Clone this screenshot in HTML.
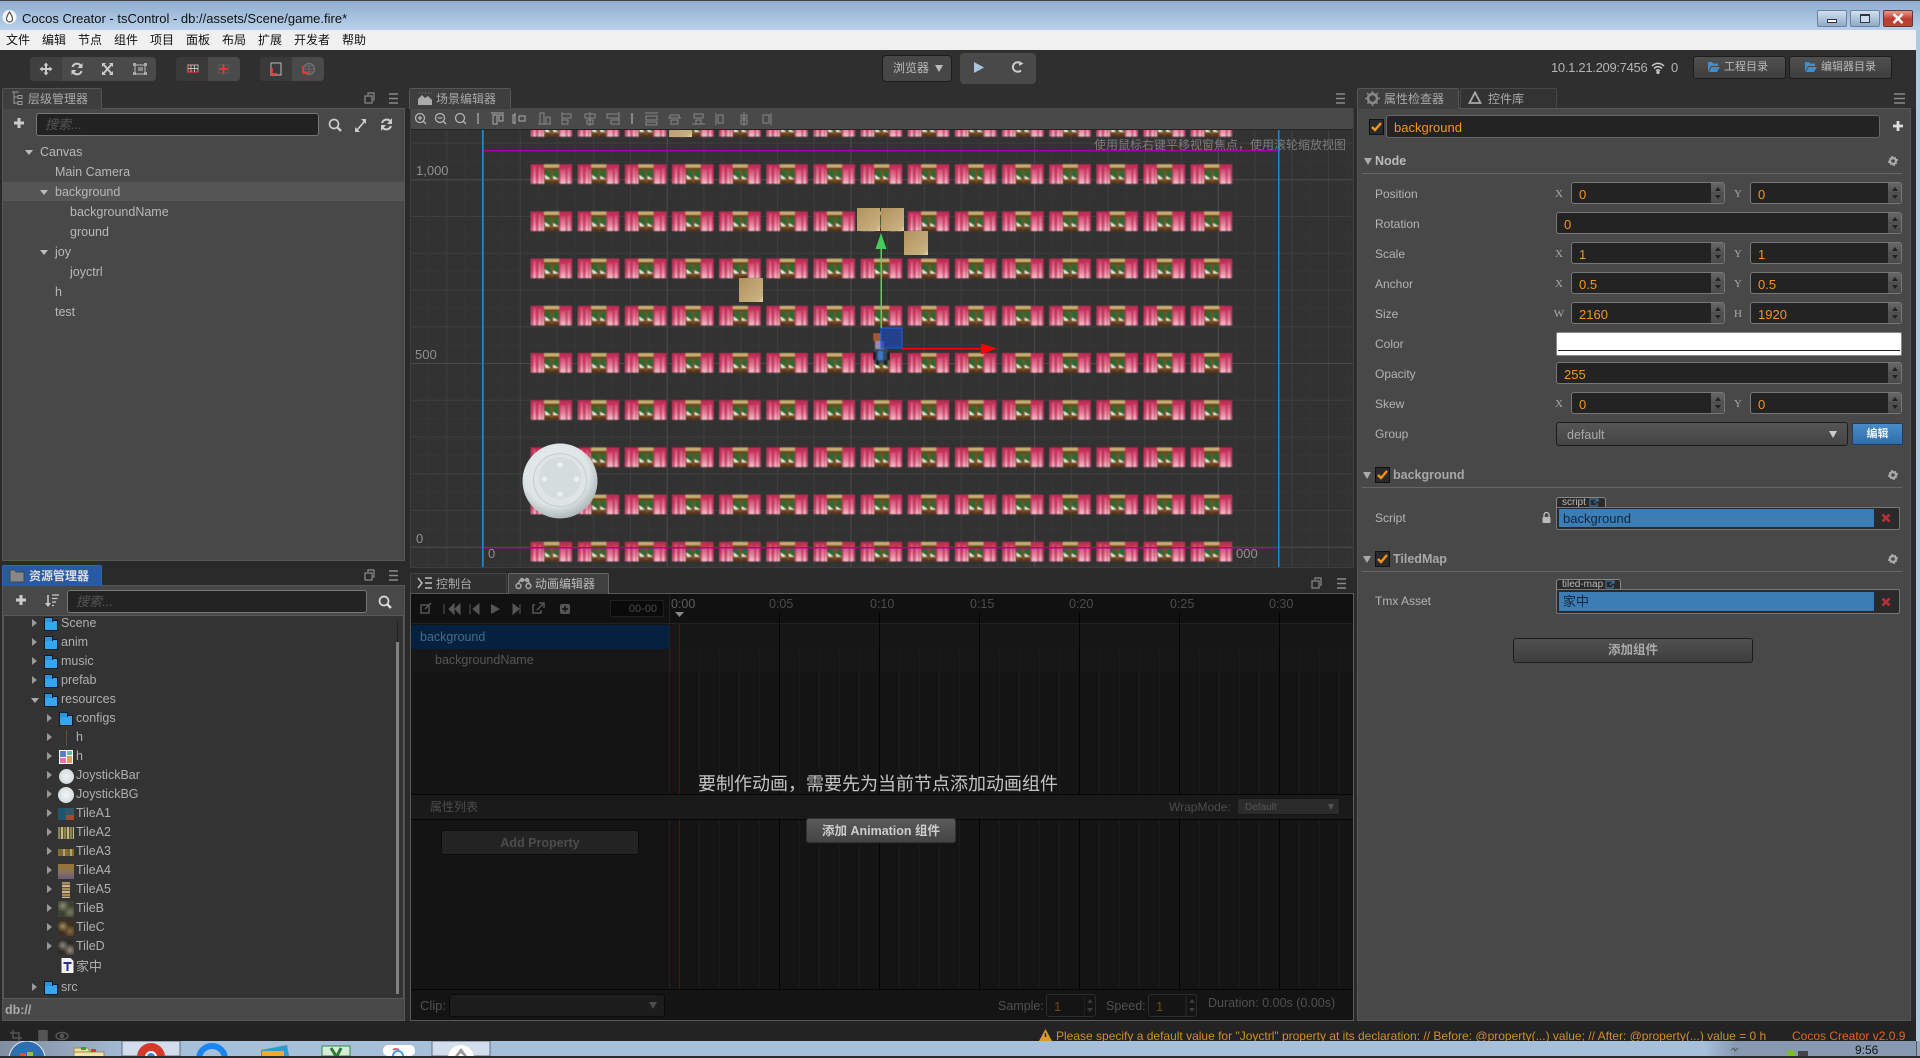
<!DOCTYPE html>
<html><head><meta charset="utf-8"><title>Cocos Creator</title>
<style>
*{box-sizing:border-box;margin:0;padding:0}
html,body{width:1920px;height:1056px;overflow:hidden;background:#2a2a2a;font-family:"Liberation Sans","Noto Sans CJK SC",sans-serif;font-size:12px;color:#bbb}
.a,.t,.p,.ip,.tab,.btn,.sp,.m{position:absolute}
.t{white-space:nowrap;line-height:16px;height:16px}
.m{top:32px;color:#111;font-size:12px;line-height:16px;white-space:nowrap}
.tab{height:21px;background:#3a3a3a;border:1px solid #555;border-bottom:0;border-radius:2px 2px 0 0;color:#aaa;font-size:12px;line-height:20px;white-space:nowrap}
.p{background:#484848;border:1px solid #565656}
.ip{height:22px;background:#232323;border:1px solid #777;border-radius:3px;color:#f7941d;font-size:13px;line-height:23px;padding-left:7px;overflow:hidden}
.ip:after{content:"";position:absolute;right:0;top:0;bottom:0;width:13px;background:linear-gradient(#666,#555 48%,#333 50%,#555 52%,#4a4a4a);}
.ip:before{content:"";position:absolute;right:3px;top:1px;width:0;height:0;border:3.5px solid transparent;border-bottom:4px solid #222;z-index:2}
.ip i{position:absolute;right:3px;bottom:1px;width:0;height:0;border:3.5px solid transparent;border-top:4px solid #222;z-index:2}
.noS:after,.noS:before{display:none}
.l{color:#b4b4b4;font-size:12px}
.xl{position:absolute;font:11px/14px "Liberation Serif",serif;color:#aaa;width:12px;text-align:center}
.btn{background:linear-gradient(#505050,#3e3e3e);border:1px solid #1c1c1c;border-radius:3px;color:#bbb;text-align:center;white-space:nowrap}
.tree{color:#b8b8b8;font-size:12.5px}
.ar{position:absolute;width:0;height:0;border:4px solid transparent}
.ad{border-top:5px solid #bbb;border-bottom:0}
.ar2{position:absolute;width:0;height:0;border:4px solid transparent;border-left:5px solid #999;border-right:0}
.ad2{position:absolute;width:0;height:0;border:4.5px solid transparent;border-top:5px solid #aaa;border-bottom:0}
.f{position:absolute;width:14px;height:11px;background:#35a6ee;border:1px solid #0e1d2a}
.f:before{content:"";position:absolute;left:-1px;top:-4px;width:7px;height:4px;background:#2b95dc;border:1px solid #0e1d2a;border-bottom:0}
.as{color:#b0b0b0;font-size:12.5px}
.th{position:absolute;left:58px;width:16px;height:16px}
.cb{position:absolute;width:15px;height:16px;background:#2a2a2a;border:1px solid #111}
.gear{position:absolute;width:10px;height:10px}
.sep{position:absolute;left:1362px;width:540px;height:1px;background:#666}
.tag{position:absolute;height:11px;background:#2a2a2a;border:1px solid #888;border-bottom:0;border-radius:3px 3px 0 0;color:#bbb;font:10px/9px "Liberation Sans",sans-serif;padding-left:5px;overflow:hidden}
.fld{position:absolute;background:#2a2a2a;border:1px solid #777;border-radius:2px}
.blue{position:absolute;background:#3d7db6;color:#14283c;font-size:13px;line-height:19px;padding-left:4px}
</style></head><body>

<svg width="0" height="0" style="position:absolute"><defs><symbol id="gr" viewBox="0 0 10 10"><path d="M5 0l1 1.500 1.800-.6.400 1.900 1.900.4-.6 1.800L10 5l-1.500 1 .6 1.800-1.900.4-.4 1.900-1.800-.6L5 10l-1-1.500-1.800.6-.4-1.900-1.900-.4.6-1.800L0 5l1.500-1-.6-1.800 1.900-.4.400-1.900 1.800.6z M5 3.200a1.800 1.800 0 1 0 0 3.600 1.800 1.800 0 0 0 0-3.600z" fill="#aaa" fill-rule="evenodd"/></symbol>
<symbol id="xx" viewBox="0 0 10 10"><path d="M1.500 1.500l7 7M8.500 1.500l-7 7" stroke="#b7303a" stroke-width="2.600"/></symbol></defs></svg>

<!-- title bar -->
<div class="a" style="left:0;top:0;width:1920px;height:30px;background:linear-gradient(#8fadd0,#b9d1e9);border-top:1px solid #444"></div>
<svg class="a" style="left:2px;top:9px" width="15" height="16" viewBox="0 0 15 16"><circle cx="7.500" cy="8" r="7" fill="#f4f4f4"/><path d="M7.500 3C5.500 6 4.500 8 4.500 10a3 3 0 0 0 6 0C10.500 8 9.500 6 7.500 3z" fill="#fff" stroke="#555" stroke-width="1.200"/></svg>
<div class="t" style="left:22px;top:11px;color:#111;font-size:13px">Cocos Creator - tsControl - db://assets/Scene/game.fire*</div>
<div class="a" style="left:1817px;top:10px;width:30px;height:17px;background:linear-gradient(#d2e0ef,#8eaac8);border:1px solid #6a84a2;border-radius:2px"></div>
<div class="a" style="left:1827px;top:19px;width:10px;height:4px;border:1px solid #334;background:#fff"></div>
<div class="a" style="left:1850px;top:10px;width:30px;height:17px;background:linear-gradient(#d2e0ef,#8eaac8);border:1px solid #6a84a2;border-radius:2px"></div>
<div class="a" style="left:1860px;top:14px;width:10px;height:9px;border:1px solid #334;border-top-width:2px;background:#cfdcec"></div>
<div class="a" style="left:1883px;top:10px;width:30px;height:17px;background:linear-gradient(#e89a8c,#c0392e 55%,#b8473a);border:1px solid #6a3530;border-radius:2px"></div>
<svg class="a" style="left:1892px;top:13px" width="12" height="11" viewBox="0 0 12 11"><path d="M1.500 1l9 9M10.500 1l-9 9" stroke="#fff" stroke-width="2.600"/></svg>

<!-- menu -->
<div class="a" style="left:0;top:30px;width:1916px;height:20px;background:#f0f0f0"></div>
<div class="a" style="left:1916px;top:30px;width:4px;height:1011px;background:#b0c8e0"></div>
<div class="m" style="left:6px">文件</div><div class="m" style="left:42px">编辑</div><div class="m" style="left:78px">节点</div><div class="m" style="left:114px">组件</div><div class="m" style="left:150px">项目</div><div class="m" style="left:186px">面板</div><div class="m" style="left:222px">布局</div><div class="m" style="left:258px">扩展</div><div class="m" style="left:294px">开发者</div><div class="m" style="left:342px">帮助</div>

<!-- toolbar -->
<div class="a" style="left:0;top:50px;width:1916px;height:58px;background:#2f2f2f"></div>
<div class="a" style="left:30px;top:57px;width:126px;height:24px;background:#4a4a4a;border-radius:4px"></div>
<div class="a" style="left:30px;top:57px;width:32px;height:24px;background:#404040;border-radius:4px 0 0 4px"></div>
<div class="a" style="left:176px;top:57px;width:64px;height:24px;background:#4a4a4a;border-radius:4px"></div>
<div class="a" style="left:176px;top:57px;width:32px;height:24px;background:#3a3a3a;border-radius:4px 0 0 4px"></div>
<div class="a" style="left:260px;top:57px;width:64px;height:24px;background:#4a4a4a;border-radius:4px"></div>
<div class="a" style="left:260px;top:57px;width:32px;height:24px;background:#3a3a3a;border-radius:4px 0 0 4px"></div>
<svg class="a" style="left:0;top:50px" width="340" height="40" viewBox="0 50 340 40" fill="none">
<path d="M46 65v8M42 69h8" stroke="#ccc" stroke-width="2"/><path d="M46 62.500l-2.500 3h5zM46 75.500l-2.500-3h5zM39.500 69l3-2.500v5zM52.500 69l-3-2.500v5z" fill="#ccc"/>
<path d="M72.500 67a4.500 4.500 0 0 1 8-1.500M81.500 71a4.500 4.500 0 0 1-8 1.500" stroke="#ccc" stroke-width="2"/><path d="M82.500 63v5h-5zM71.500 75v-5h5z" fill="#ccc"/>
<path d="M104 65l7 8M111 65l-7 8" stroke="#ccc" stroke-width="2"/><path d="M102 63h4l-4 4zM113 63h-4l4 4zM102 75h4l-4-4zM113 75h-4l4-4z" fill="#ccc"/>
<rect x="135" y="65" width="10" height="9" stroke="#aaa" stroke-width="1.200"/><path d="M133 63h3v3h-3zM144 63h3v3h-3zM133 72h3v3h-3zM144 72h3v3h-3z" fill="#aaa"/><rect x="138" y="67" width="5" height="4" fill="#888"/>
<rect x="188" y="65" width="10" height="7" stroke="#bbb" stroke-width=".9"/><path d="M187.500 64v8h11" stroke="#e33" stroke-width="1.300"/><path d="M191 65v7M194.500 65v7M188 68.500h10" stroke="#bbb" stroke-width=".9"/>
<rect x="218" y="65" width="11" height="8" stroke="#666" stroke-width=".9" stroke-dasharray="1 1"/><path d="M223.500 64v10M219 69h9" stroke="#e33" stroke-width="1.800"/>
<rect x="271" y="63" width="10" height="12" stroke="#bbb" stroke-width="1"/><path d="M272 68v6h5" stroke="#e33" stroke-width="1.800"/>
<circle cx="309" cy="69" r="5.500" stroke="#777"/><path d="M303.500 69h11M309 63.500v11M304.500 66h9M304.500 72h9" stroke="#777" stroke-width=".7"/><path d="M303 66v7h6" stroke="#e33" stroke-width="1.800"/>
</svg>

<div class="btn" style="left:882px;top:55px;width:70px;height:27px;background:#474747;border-radius:4px"></div>
<div class="t" style="left:893px;top:60px;color:#bbb;font-size:12px">浏览器</div>
<div class="a" style="left:935px;top:65px;width:0;height:0;border:4px solid transparent;border-top:7px solid #bbb;border-bottom:0"></div>
<div class="a" style="left:960px;top:53px;width:76px;height:31px;background:#494949;border-radius:4px"></div>
<svg class="a" style="left:970px;top:58px" width="60" height="18" viewBox="0 0 60 18"><path d="M4 4l10 5.500-10 5.500z" fill="#a8c4de"/><path d="M51 5.500a4.800 4.800 0 1 0 0 7" stroke="#ccc" stroke-width="2" fill="none"/><path d="M49 3l4.500 2.500-4.500 2.500z" fill="#ccc"/></svg>

<div class="t" style="left:1551px;top:60px;color:#b4b4b4;font-size:13px;letter-spacing:-.3px">10.1.21.209:7456</div>
<svg class="a" style="left:1651px;top:62px" width="14" height="12" viewBox="0 0 14 12" fill="none" stroke="#ccc" stroke-width="1.400"><path d="M1 4c3.500-3.500 8.500-3.500 12 0M3 6.500c2.500-2.500 5.500-2.500 8 0M5 8.800c1.300-1.200 2.700-1.200 4 0"/><circle cx="7" cy="10.500" r=".9" fill="#ccc"/></svg>
<div class="t" style="left:1671px;top:60px;color:#b4b4b4;font-size:13px">0</div>
<div class="btn" style="left:1693px;top:56px;width:93px;height:23px"></div>
<div class="btn" style="left:1789px;top:56px;width:103px;height:23px"></div>
<div class="t" style="left:1724px;top:59px;font-size:11px;color:#bbb">工程目录</div>
<div class="t" style="left:1821px;top:59px;font-size:11px;color:#bbb">编辑器目录</div>
<svg class="a" style="left:1708px;top:61px" width="12" height="12" viewBox="0 0 12 12"><path d="M0 1h4l1 1.500h5V5H3L0 11z M3.500 6H12L9 11H1z" fill="#3f8ed0"/></svg>
<svg class="a" style="left:1805px;top:61px" width="12" height="12" viewBox="0 0 12 12"><path d="M0 1h4l1 1.500h5V5H3L0 11z M3.500 6H12L9 11H1z" fill="#3f8ed0"/></svg>

<!-- hierarchy -->
<div class="tab" style="left:2px;top:88px;width:100px;padding-left:25px;z-index:2;background:#3e3e3e">层级管理器</div>
<svg class="a" style="left:9px;top:91px;z-index:3" width="16" height="15" viewBox="0 0 16 15" fill="none" stroke="#999"><path d="M3 1h7M5 1v12M5 6h4M5 12h4"/><rect x="9" y="4.500" width="4" height="3"/><rect x="9" y="10.500" width="4" height="3"/></svg>
<svg class="a" style="left:364px;top:92px" width="36" height="14" viewBox="0 0 36 14" fill="none" stroke="#8a8a8a" stroke-width="1.200"><rect x="1" y="4" width="7" height="7"/><path d="M4 3V1h6v7H9"/><path d="M25 2h9M25 6.500h9M25 11h9" stroke-width="1.500"/></svg>
<div class="p" style="left:2px;top:108px;width:403px;height:453px"></div>
<svg class="a" style="left:12px;top:116px" width="14" height="14" viewBox="0 0 14 14"><path d="M7 2v10M2 7h10" stroke="#ccc" stroke-width="3"/></svg>
<div class="a" style="left:36px;top:113px;width:283px;height:23px;background:#222;border:1px solid #777;border-radius:3px;padding-left:8px;color:#555;font-size:13px;line-height:22px;font-style:italic">搜索...</div>
<svg class="a" style="left:326px;top:116px" width="70" height="18" viewBox="0 0 70 18" fill="none" stroke="#ccc" stroke-width="1.700"><circle cx="8" cy="8" r="4.500"/><path d="M11 11l4 4" stroke-width="2.400"/><path d="M31 14l7-8" /><path d="M35 3h5v5zM29 11v5h5z" fill="#ccc" stroke="none"/><path d="M56 7a5 5 0 0 1 9-1M65 10a5 5 0 0 1-9 1" stroke-width="2"/><path d="M66 2v6h-5zM55 15V9h5z" fill="#ccc" stroke="none"/></svg>
<div class="a" style="left:3px;top:182px;width:401px;height:19px;background:#555"></div>
<div class="ar ad" style="left:25px;top:150px"></div><div class="t tree" style="left:40px;top:144px">Canvas</div>
<div class="t tree" style="left:55px;top:164px">Main Camera</div>
<div class="ar ad" style="left:40px;top:190px"></div><div class="t tree" style="left:55px;top:184px">background</div>
<div class="t tree" style="left:70px;top:204px">backgroundName</div>
<div class="t tree" style="left:70px;top:224px">ground</div>
<div class="ar ad" style="left:40px;top:250px"></div><div class="t tree" style="left:55px;top:244px">joy</div>
<div class="t tree" style="left:70px;top:264px">joyctrl</div>
<div class="t tree" style="left:55px;top:284px">h</div>
<div class="t tree" style="left:55px;top:304px">test</div>

<!-- scene -->
<div class="tab" style="left:409px;top:88px;width:102px;padding-left:26px;z-index:2;background:#3e3e3e">场景编辑器</div>
<svg class="a" style="left:417px;top:91px;z-index:3" width="16" height="15" viewBox="0 0 16 15"><path d="M1 14V8l4-4 3 3 3-2 4 4v5z" fill="#aaa"/><path d="M2 2h1M5 2h1M8 2h1M11 2h1M14 2h1" stroke="#777"/></svg>
<svg class="a" style="left:1334px;top:92px" width="14" height="14" viewBox="0 0 14 14" stroke="#8a8a8a" stroke-width="1.500"><path d="M2 2h9M2 6.500h9M2 11h9"/></svg>
<div class="a" style="left:410px;top:108px;width:944px;height:460px;background:#2a2a2a;border:1px solid #3f3f3f"></div>
<div class="a" style="left:411px;top:108px;width:942px;height:22px;background:#494949;border-bottom:1px solid #252525"></div>
<svg class="a" style="left:411px;top:108px" width="380" height="22" viewBox="411 108 380 22" fill="none" stroke="#b5b5b5" stroke-width="1.300">
<circle cx="420" cy="118" r="4.500"/><path d="M423 121l3 3M418 118h4M420 116v4" /><circle cx="440" cy="118" r="4.500"/><path d="M443 121l3 3M438 118h4"/><circle cx="460" cy="118" r="4.500"/><path d="M463 121l3 3"/>
<path d="M478 113v11M632 113v11" stroke="#aaa"/>
<path d="M491 113h13M493 115h4v9h-4zM499 115h4v6h-4z M515 113v11M515 115h-2v8h2zM519 116h6v5h-6z" stroke="#aaa" stroke-width="1"/>
<path d="M538 124h13M540 113h4v11h-4zM546 117h4v7h-4zM562 112v13M562 114h9v4h-9zM562 120h6v4h-6z M590 112v14M585 114h10v4h-10zM587 120h6v4h-6zM619 112v13M607 114h12v4h-12zM611 120h8v4h-8z" stroke="#888" stroke-width="1"/>
<path d="M645 113h13M646 116h11v4h-11zM646 122h11v3h-11zM668 118h13M670 115h9v3h-9zM671 120h7v4h-7zM692 124h13M694 114h9v4h-9zM696 120h5v4h-5z" stroke="#888" stroke-width="1"/>
<path d="M716 113v12M718 115h5v8h-5zM744 112v14M741 115h6v3h-6zM741 120h6v4h-6zM771 113v12M763 115h6v8h-6z" stroke="#888" stroke-width="1"/>
</svg>

<svg class="a" style="left:0;top:0" width="1920" height="1056" viewBox="0 0 1920 1056">
<defs>
<clipPath id="vp"><rect x="411" y="130" width="942" height="437"/></clipPath>
<filter id="soft" x="0" y="0" width="100%" height="100%"><feGaussianBlur stdDeviation=".45"/></filter>
<pattern id="minor" x="483" y="179.300" width="36.740" height="36.740" patternUnits="userSpaceOnUse"><path d="M.5 0v36.740M0 .5h36.740" stroke="#3f3f3f" fill="none"/><path d="M18.870 0v36.740M0 18.870h36.740" stroke="#363636" fill="none"/></pattern>
<pattern id="major" x="483" y="179.300" width="183.700" height="183.700" patternUnits="userSpaceOnUse"><path d="M.5 0v183.700M0 .5h183.700" stroke="#4a4a4a" fill="none"/></pattern>
<linearGradient id="cl" x1="0" x2="0" y1="0" y2="1"><stop offset="0" stop-color="#bf2b54"/><stop offset=".6" stop-color="#c93e66"/><stop offset="1" stop-color="#d8688a"/></linearGradient>
<linearGradient id="cw" x1="0" x2="0" y1="0" y2="1"><stop offset="0" stop-color="#d04a70"/><stop offset=".6" stop-color="#e68aa2"/><stop offset="1" stop-color="#f5c4ce"/></linearGradient>
<linearGradient id="bk" x1="0" x2="1" y1="0" y2="1"><stop offset="0" stop-color="#b0925f"/><stop offset=".5" stop-color="#bfa371"/><stop offset=".85" stop-color="#c9b080"/><stop offset="1" stop-color="#e6d8a4"/></linearGradient>
<pattern id="tile" x="530.600" y="117" width="47.150" height="47.200" patternUnits="userSpaceOnUse">
<rect x="0" y="0" width="14.500" height="19.600" fill="url(#cl)"/>
<rect x="27.500" y="0" width="14" height="19.600" fill="url(#cl)"/>
<rect x="3" y="2" width="2" height="17.600" fill="url(#cw)"/>
<rect x="8" y="3" width="2.500" height="16.600" fill="url(#cw)"/>
<rect x="11.500" y="5" width="3" height="14.600" fill="url(#cw)"/>
<rect x="30" y="5" width="5" height="14.600" fill="url(#cw)"/>
<rect x="37" y="4" width="2.500" height="15.600" fill="url(#cw)"/>
<rect x="13.500" y="6" width="15" height="13.600" fill="#5e3c1c"/>
<rect x="13.500" y="0" width="15" height="3.500" fill="#c7ae70"/>
<rect x="13.500" y="3.500" width="15" height="2.500" fill="#6a461e"/>
<path d="M15 6h5.500v8H15zM22.500 6H28v7.500h-5.500z" fill="#2c6a30"/>
<path d="M14 10.500l3 2 3 2.500-5 0zM22.500 11.500l3 2 3 1.500-6 0z" fill="#eef0e0"/>
<rect x="20.500" y="6" width="2" height="13.600" fill="#7a5226"/>
<rect x="13.500" y="15" width="15" height="1.600" fill="#7a5226"/>
<rect x="13.500" y="18" width="15" height="1.600" fill="#54341a"/>
</pattern>
</defs>
<g clip-path="url(#vp)">
<rect x="411" y="130" width="942" height="437" fill="#323232"/>
<rect x="411" y="130" width="942" height="437" fill="url(#minor)"/>
<rect x="411" y="130" width="942" height="437" fill="url(#major)"/>
<rect x="530" y="117" width="703" height="450" fill="url(#tile)" filter="url(#soft)"/>
<rect x="669" y="117" width="23" height="20" fill="url(#bk)"/>
<rect x="857" y="208" width="23" height="23" fill="url(#bk)"/>
<rect x="881" y="208" width="23" height="23" fill="url(#bk)"/>
<rect x="904" y="231" width="24" height="24" fill="url(#bk)"/>
<rect x="739" y="278" width="24" height="24" fill="url(#bk)"/>
<rect x="483" y="150" width="795" height="1.500" fill="#a800a8"/>
<rect x="483" y="547" width="795" height="1.500" fill="#a800a8"/>
<rect x="482" y="130" width="1.500" height="437" fill="#1e88d8"/>
<rect x="1278" y="130" width="1.500" height="437" fill="#1e88d8"/>
<text x="416" y="175" font-size="13" fill="#909090" font-family="Liberation Sans">1,000</text>
<text x="415" y="359" font-size="13" fill="#909090" font-family="Liberation Sans">500</text>
<text x="416" y="543" font-size="13" fill="#909090" font-family="Liberation Sans">0</text>
<text x="488" y="558" font-size="13" fill="#909090" font-family="Liberation Sans">0</text>
<text x="1236" y="558" font-size="13" fill="#909090" font-family="Liberation Sans">000</text>
<text x="1094" y="149" font-size="12" fill="#7c7c7c" font-family="Liberation Sans, Noto Sans CJK SC">使用鼠标右键平移视窗焦点，使用滚轮缩放视图</text>
<!-- sprite -->
<g filter="url(#soft)"><path d="M873 333h8v8h-8z" fill="#a5562f"/><path d="M874 349h14v14h-14z" fill="#34465c"/><path d="M878 351h5v9h-5z" fill="#3c78c8"/><path d="M873 352h3v8h-3zM887 352h3v8h-3zM876 360h3v5h-3zM884 360h3v5h-3z" fill="#1c1c22"/><path d="M875 341h9v8h-9z" fill="#9a8aa8"/></g>
<rect x="881" y="328" width="21" height="20" fill="#1d46b4" fill-opacity=".7" stroke="#1560f0"/>
<rect x="880.500" y="248" width="1.500" height="80" fill="#55d068"/><path d="M881 233l5.500 16h-11z" fill="#45cc5a"/>
<rect x="902" y="348" width="80" height="1.500" fill="#f00"/><path d="M997 348.500l-16-5v11z" fill="#f00"/>
<!-- joystick -->
<defs><radialGradient id="jb" cx=".45" cy=".4" r=".62"><stop offset="0" stop-color="#eef2f2"/><stop offset=".7" stop-color="#dde4e5"/><stop offset="1" stop-color="#a9b3b6"/></radialGradient></defs>
<circle cx="560" cy="481" r="37.500" fill="url(#jb)"/>
<circle cx="560" cy="480" r="26.500" fill="#dfe5e6" stroke="#c4cccd"/><circle cx="560" cy="478" r="21" fill="#d4dcdd"/>
<circle cx="560" cy="465" r="2.800" fill="#e9eeee"/><circle cx="560" cy="494" r="2.800" fill="#e9eeee"/><circle cx="544.500" cy="479" r="2.800" fill="#e9eeee"/><circle cx="576.500" cy="479" r="2.800" fill="#e9eeee"/>
</g>
</svg>

<!-- assets -->
<div class="tab" style="left:2px;top:565px;width:100px;background:#275aa0;border-color:#2d66b4;color:#ddd;font-weight:bold;padding-left:26px;z-index:2">资源管理器</div>
<svg class="a" style="left:9px;top:568px;z-index:3" width="16" height="15" viewBox="0 0 16 15"><path d="M1 2h5l1 2h8v10H1z" fill="#888" stroke="#444"/></svg>
<svg class="a" style="left:364px;top:569px" width="36" height="14" viewBox="0 0 36 14" fill="none" stroke="#8a8a8a" stroke-width="1.200"><rect x="1" y="4" width="7" height="7"/><path d="M4 3V1h6v7H9"/><path d="M25 2h9M25 6.500h9M25 11h9" stroke-width="1.500"/></svg>
<div class="p" style="left:2px;top:585px;width:403px;height:436px"></div>
<svg class="a" style="left:14px;top:593px" width="46" height="16" viewBox="0 0 46 16" fill="none" stroke="#ccc"><path d="M7 2v10M2 7h10" stroke-width="3"/><path d="M34 2v11" stroke-width="1.500"/><path d="M31 10l3 4 3-4z" fill="#ccc" stroke="none"/><path d="M38 2h7M38 5.500h5.500M38 9h4M38 12.500h2" stroke-width="1.300"/></svg>
<div class="a" style="left:67px;top:590px;width:300px;height:23px;background:#232323;border:1px solid #777;border-radius:3px;padding-left:8px;color:#555;font-size:13px;line-height:22px;font-style:italic">搜索...</div>
<svg class="a" style="left:377px;top:594px" width="18" height="16" viewBox="0 0 18 16" fill="none" stroke="#ddd" stroke-width="1.700"><circle cx="7" cy="7" r="4.500"/><path d="M10 10l4 4" stroke-width="2.400"/></svg>
<div class="a" style="left:3px;top:615px;width:401px;height:384px;background:#333;border:1px solid #585858;overflow:hidden"></div>
<div class="a" style="left:396px;top:642px;width:3px;height:352px;background:#808080"></div>
<div class="a" style="left:397px;top:621px;width:1px;height:21px;background:#222"></div>
<div class="t" style="left:5px;top:1002px;color:#aaa;font-weight:bold;font-size:12.500px">db://</div>

<div class="ar2" style="left:32px;top:619px"></div><div class="f" style="left:44px;top:620px"></div><div class="t as" style="left:61px;top:615px">Scene</div>
<div class="ar2" style="left:32px;top:638px"></div><div class="f" style="left:44px;top:639px"></div><div class="t as" style="left:61px;top:634px">anim</div>
<div class="ar2" style="left:32px;top:657px"></div><div class="f" style="left:44px;top:658px"></div><div class="t as" style="left:61px;top:653px">music</div>
<div class="ar2" style="left:32px;top:676px"></div><div class="f" style="left:44px;top:677px"></div><div class="t as" style="left:61px;top:672px">prefab</div>
<div class="ad2" style="left:31px;top:698px"></div><div class="f" style="left:44px;top:696px"></div><div class="t as" style="left:61px;top:691px">resources</div>
<div class="ar2" style="left:47px;top:714px"></div><div class="f" style="left:59px;top:715px"></div><div class="t as" style="left:76px;top:710px">configs</div>
<div class="ar2" style="left:47px;top:733px"></div><div class="a" style="left:66px;top:730px;width:1px;height:16px;background:#6a4a3a"></div><div class="t as" style="left:76px;top:729px">h</div>
<div class="ar2" style="left:47px;top:752px"></div><div class="t as" style="left:76px;top:748px">h</div>
<svg class="th" style="top:750px" width="16" height="16" viewBox="0 0 16 16"><rect x="1" y="0" width="14" height="14" fill="#fff"/><rect x="2" y="1" width="6" height="6" fill="#5b7fd0"/><rect x="9" y="1" width="5" height="4" fill="#56c59c"/><rect x="9" y="6" width="5" height="7" fill="#ec9a5c"/><rect x="2" y="8" width="6" height="5" fill="#ec70a8"/></svg>
<div class="ar2" style="left:47px;top:771px"></div><div class="t as" style="left:76px;top:767px">JoystickBar</div>
<div class="a" style="left:59px;top:769px;width:15px;height:15px;border-radius:50%;background:radial-gradient(#eef2f2,#c8d2d3)"></div>
<div class="ar2" style="left:47px;top:790px"></div><div class="t as" style="left:76px;top:786px">JoystickBG</div>
<div class="a" style="left:58px;top:787px;width:16px;height:16px;border-radius:50%;background:radial-gradient(#f4f6f6,#c8d2d3)"></div>
<div class="ar2" style="left:47px;top:809px"></div><div class="t as" style="left:76px;top:805px">TileA1</div>
<div class="a" style="left:58px;top:808px;width:16px;height:12px;background:linear-gradient(90deg,#1f5470 0 45%,#33566a 45% 100%);"></div><div class="a" style="left:66px;top:815px;width:8px;height:5px;background:#a5482c"></div>
<div class="ar2" style="left:47px;top:828px"></div><div class="t as" style="left:76px;top:824px">TileA2</div>
<div class="a" style="left:58px;top:827px;width:16px;height:12px;background:repeating-linear-gradient(90deg,#8c8450 0 2px,#4a5a28 2px 3px,#c4b898 3px 5px,#745028 5px 6px)"></div>
<div class="ar2" style="left:47px;top:847px"></div><div class="t as" style="left:76px;top:843px">TileA3</div>
<div class="a" style="left:58px;top:849px;width:16px;height:7px;background:repeating-linear-gradient(90deg,#8a6a28 0 3px,#6a6a4c 3px 5px,#b8a468 5px 7px)"></div>
<div class="ar2" style="left:47px;top:866px"></div><div class="t as" style="left:76px;top:862px">TileA4</div>
<div class="a" style="left:58px;top:864px;width:16px;height:15px;background:linear-gradient(#9a7434,#8a7454 50%,#6a5a7a)"></div>
<div class="ar2" style="left:47px;top:885px"></div><div class="t as" style="left:76px;top:881px">TileA5</div>
<div class="a" style="left:62px;top:882px;width:8px;height:16px;background:repeating-linear-gradient(#a88c5c 0 2px,#70604a 2px 3px,#c4b490 3px 5px,#7a4a3a 5px 6px)"></div>
<div class="ar2" style="left:47px;top:904px"></div><div class="t as" style="left:76px;top:900px">TileB</div>
<div class="a" style="left:58px;top:901px;width:16px;height:16px;background:radial-gradient(circle at 30% 30%,#8a8a70,transparent 40%),radial-gradient(circle at 75% 70%,#7a7a60,transparent 40%),#3c4232"></div>
<div class="ar2" style="left:47px;top:923px"></div><div class="t as" style="left:76px;top:919px">TileC</div>
<div class="a" style="left:58px;top:920px;width:16px;height:16px;background:radial-gradient(circle at 30% 40%,#a88c58,transparent 40%),radial-gradient(circle at 75% 70%,#8a6a3c,transparent 40%),#3c3020"></div>
<div class="ar2" style="left:47px;top:942px"></div><div class="t as" style="left:76px;top:938px">TileD</div>
<div class="a" style="left:58px;top:939px;width:16px;height:16px;background:radial-gradient(circle at 30% 40%,#8a8a80,transparent 40%),radial-gradient(circle at 75% 70%,#9a9078,transparent 40%),#302c28"></div>
<svg class="th" style="left:60px;top:958px" width="13" height="16" viewBox="0 0 13 16"><path d="M0 0h9l3 3v12H0z" fill="#f2f2f4"/><path d="M2 4h8v2H7v7H5V6H2z" fill="#27308e"/></svg>
<div class="t as" style="left:76px;top:959px;font-size:13px">家中</div>
<div class="ar2" style="left:32px;top:983px"></div><div class="f" style="left:44px;top:984px"></div><div class="t as" style="left:61px;top:979px">src</div>

<!-- animation -->
<div class="tab" style="left:410px;top:573px;width:97px;height:20px;background:#2f2f2f;border-color:#444;padding-left:25px;color:#aaa">控制台</div>
<svg class="a" style="left:417px;top:577px" width="16" height="12" viewBox="0 0 16 12" fill="none" stroke="#bbb" stroke-width="1.500"><path d="M1 1l4 5-4 5M8 1h7M8 6h7M8 11h7"/></svg>
<div class="tab" style="left:508px;top:573px;width:101px;background:#404040;border-color:#666;padding-left:26px;color:#bbb;z-index:2">动画编辑器</div>
<svg class="a" style="left:515px;top:577px;z-index:3" width="18" height="13" viewBox="0 0 18 13" fill="none" stroke="#aaa" stroke-width="1.400"><circle cx="3.500" cy="9" r="2.500"/><circle cx="13.500" cy="9" r="2.500"/><path d="M5 3h8l2 5M5 3L3 7"/><circle cx="7" cy="3" r="1.500"/><circle cx="12" cy="3" r="1.500"/></svg>
<svg class="a" style="left:1310px;top:577px" width="40" height="14" viewBox="0 0 40 14" fill="none" stroke="#8a8a8a" stroke-width="1.200"><rect x="2" y="4" width="7" height="7"/><path d="M5 3V1h6v7h-1"/><path d="M27 2h9M27 6.500h9M27 11h9" stroke-width="1.500"/></svg>
<div class="a" style="left:410px;top:593px;width:944px;height:428px;background:#141414;border:1px solid #5a5a5a"></div>
<div class="a" style="left:411px;top:594px;width:942px;height:30px;background:#111;border-bottom:1px solid #222"></div>
<svg class="a" style="left:411px;top:594px" width="970" height="400" viewBox="411 594 970 400" fill="none">
<defs><pattern id="mi" x="679" y="624" width="20" height="10" patternUnits="userSpaceOnUse"><path d="M.5 0v10" stroke="#1c1c1c"/></pattern></defs>
<rect x="669" y="624" width="684" height="366" fill="url(#mi)"/>
<rect x="411" y="625" width="258" height="24" fill="#04223f"/>
<rect x="411" y="649" width="942" height="23" fill="#171717"/>
<rect x="669" y="625" width="684" height="24" fill="#161616"/>
<rect x="669" y="649" width="684" height="23" fill="url(#mi)"/>
<path d="M779.500 612V990M879.500 612V990M979.500 612V990M1079.500 612V990M1179.500 612V990M1279.500 612V990" stroke="#020202"/>
<path d="M669.500 594V990" stroke="#222"/>
<path d="M679.500 624V990" stroke="#5c0f12"/>
<path d="M675 612h9l-4.500 5z" fill="#888"/>
<rect x="411" y="794" width="942" height="25" fill="#1a1a1a"/>
<path d="M411 794.500h942M411 819.500h942M411 989.500h942" stroke="#060606"/>
<path d="M421 605h8v8h-8zM425 609l6-6" stroke="#555" stroke-width="1.500"/>
<path d="M444 604v10M454 604l-5 5 5 5zM460 604l-5 5 5 5z" stroke="#555" fill="#555" stroke-width="1"/>
<path d="M470 604v10M479 604l-6 5 6 5z" stroke="#555" fill="#555"/>
<path d="M491 604l9 5-9 5z" fill="#555"/>
<path d="M520 604v10M513 604l6 5-6 5z" stroke="#555" fill="#555"/>
<path d="M535 605h-2v8h8v-3M537 610l6-6M539 603h5v5" stroke="#555" stroke-width="1.500"/>
<rect x="560" y="604" width="10" height="10" rx="2" fill="#555"/><path d="M565 606v6M562 609h6" stroke="#111" stroke-width="1.500"/>
</svg>
<div class="a" style="left:610px;top:600px;width:54px;height:17px;background:#0a0a0a;border:1px solid #202020;color:#4a4a4a;font-size:11px;line-height:16px;text-align:right;padding-right:6px">00-00</div>
<div class="t" style="left:671px;top:596px;color:#5c5c5c;font-size:12.500px">0:00</div>
<div class="t" style="left:769px;top:596px;color:#4c4c4c;font-size:12.500px">0:05</div>
<div class="t" style="left:870px;top:596px;color:#4c4c4c;font-size:12.500px">0:10</div>
<div class="t" style="left:970px;top:596px;color:#4c4c4c;font-size:12.500px">0:15</div>
<div class="t" style="left:1069px;top:596px;color:#4c4c4c;font-size:12.500px">0:20</div>
<div class="t" style="left:1170px;top:596px;color:#4c4c4c;font-size:12.500px">0:25</div>
<div class="t" style="left:1269px;top:596px;color:#4c4c4c;font-size:12.500px">0:30</div>
<div class="t" style="left:420px;top:629px;color:#4b6b84;font-size:12.500px">background</div>
<div class="t" style="left:435px;top:652px;color:#565656;font-size:12.500px">backgroundName</div>
<div class="t" style="left:698px;top:774px;color:#c4c4c4;font-size:18px;line-height:20px;height:20px">要制作动画，需要先为当前节点添加动画组件</div>
<div class="t" style="left:430px;top:799px;color:#4c4c4c;font-size:12px">属性列表</div>
<div class="t" style="left:1169px;top:799px;color:#4c4c4c;font-size:12px">WrapMode:</div>
<div class="a" style="left:1237px;top:798px;width:103px;height:17px;background:#2b2b2b;border:1px solid #161616;border-radius:2px;color:#555;font-size:10px;line-height:17px;padding-left:7px">Default</div>
<div class="a" style="left:1328px;top:804px;width:0;height:0;border:3.500px solid transparent;border-top:6px solid #555;border-bottom:0"></div>
<div class="a" style="left:441px;top:830px;width:198px;height:25px;background:#232323;border:1px solid #0c0c0c;border-radius:3px;color:#4c4c4c;font-weight:bold;font-size:12.500px;line-height:25px;text-align:center">Add Property</div>
<div class="a" style="left:806px;top:818px;width:150px;height:25px;background:linear-gradient(#5a5a5a,#444);border-radius:3px;border:1px solid #333;color:#ccc;font-weight:bold;font-size:12.500px;line-height:25px;text-align:center;white-space:nowrap">添加 Animation 组件</div>
<div class="t" style="left:420px;top:998px;color:#505050;font-size:13px">Clip:</div>
<div class="a" style="left:449px;top:994px;width:216px;height:23px;background:#1c1c1c;border:1px solid #0a0a0a;border-radius:3px"></div>
<div class="a" style="left:649px;top:1002px;width:0;height:0;border:4px solid transparent;border-top:7px solid #4c4c4c;border-bottom:0"></div>
<div class="t" style="left:998px;top:998px;color:#505050;font-size:12.500px">Sample:</div>
<div class="a" style="left:1046px;top:994px;width:50px;height:23px;background:#141414;border:1px solid #2c2c2c;border-radius:3px;color:#6e4a18;font-size:13px;line-height:23px;padding-left:7px">1</div>
<div class="t" style="left:1106px;top:998px;color:#505050;font-size:12.500px">Speed:</div>
<div class="a" style="left:1148px;top:994px;width:49px;height:23px;background:#141414;border:1px solid #2c2c2c;border-radius:3px;color:#6e4a18;font-size:13px;line-height:23px;padding-left:7px">1</div>
<svg class="a" style="left:1084px;top:996px" width="120" height="20" viewBox="0 0 120 20"><path d="M3 7l3-4 3 4zM3 12l3 4 3-4zM105 7l3-4 3 4zM105 12l3 4 3-4z" fill="#3c3c3c"/><path d="M0 0v20M102 0v20" stroke="#2c2c2c"/></svg>
<div class="t" style="left:1208px;top:995px;color:#505050;font-size:12.500px">Duration: 0.00s (0.00s)</div>

<!-- inspector -->
<div class="tab" style="left:1357px;top:88px;width:102px;background:#3e3e3e;padding-left:26px;z-index:2;color:#aaa">属性检查器</div>
<svg class="a" style="left:1365px;top:91px;z-index:3" width="15" height="15" viewBox="0 0 15 15"><circle cx="7.500" cy="7.500" r="4.500" fill="none" stroke="#888" stroke-width="2.500"/><path d="M7.500 0v15M0 7.500h15M2 2l11 11M13 2L2 13" stroke="#888" stroke-width="1.500" stroke-dasharray="2 11"/></svg>
<div class="tab" style="left:1460px;top:88px;width:97px;height:20px;background:#333;padding-left:27px;border-color:#484848;color:#aaa">控件库</div>
<svg class="a" style="left:1468px;top:91px" width="14" height="13" viewBox="0 0 14 13" fill="none" stroke="#aaa" stroke-width="1.800"><path d="M7 1.500L1.500 12h11z"/></svg>
<svg class="a" style="left:1893px;top:92px" width="14" height="14" viewBox="0 0 14 14" stroke="#8a8a8a" stroke-width="1.500"><path d="M1 2h11M1 6.500h11M1 11h11"/></svg>
<div class="p" style="left:1357px;top:108px;width:554px;height:913px"></div>

<div class="cb" style="left:1369px;top:119px"></div>
<svg class="a" style="left:1369px;top:119px" width="15" height="16" viewBox="0 0 15 16"><path d="M3 8l3 3 6-7" fill="none" stroke="#f7941d" stroke-width="2.400"/></svg>
<div class="ip noS" style="left:1386px;top:115px;width:494px;height:23px;font-size:13px;border-color:#666">background</div>
<svg class="a" style="left:1891px;top:119px" width="14" height="14" viewBox="0 0 14 14"><path d="M7 2v10M2 7h10" stroke="#ddd" stroke-width="2.800"/></svg>

<div class="ad2" style="left:1364px;top:158px;border-top-width:7px"></div>
<div class="t" style="left:1375px;top:153px;font-weight:bold;color:#bbb;font-size:12.500px">Node</div>
<svg class="gear" style="left:1888px;top:156px"><use href="#gr"/></svg>
<div class="sep" style="top:173px"></div>

<div class="t l" style="left:1375px;top:186px">Position</div>
<div class="xl" style="left:1553px;top:187px">X</div><div class="ip" style="left:1571px;top:182px;width:154px"><i></i>0</div>
<div class="xl" style="left:1732px;top:187px">Y</div><div class="ip" style="left:1750px;top:182px;width:152px"><i></i>0</div>
<div class="t l" style="left:1375px;top:216px">Rotation</div>
<div class="ip" style="left:1556px;top:212px;width:346px"><i></i>0</div>
<div class="t l" style="left:1375px;top:246px">Scale</div>
<div class="xl" style="left:1553px;top:247px">X</div><div class="ip" style="left:1571px;top:242px;width:154px"><i></i>1</div>
<div class="xl" style="left:1732px;top:247px">Y</div><div class="ip" style="left:1750px;top:242px;width:152px"><i></i>1</div>
<div class="t l" style="left:1375px;top:276px">Anchor</div>
<div class="xl" style="left:1553px;top:277px">X</div><div class="ip" style="left:1571px;top:272px;width:154px"><i></i>0.5</div>
<div class="xl" style="left:1732px;top:277px">Y</div><div class="ip" style="left:1750px;top:272px;width:152px"><i></i>0.5</div>
<div class="t l" style="left:1375px;top:306px">Size</div>
<div class="xl" style="left:1553px;top:307px">W</div><div class="ip" style="left:1571px;top:302px;width:154px"><i></i>2160</div>
<div class="xl" style="left:1732px;top:307px">H</div><div class="ip" style="left:1750px;top:302px;width:152px"><i></i>1920</div>
<div class="t l" style="left:1375px;top:336px">Color</div>
<div class="a" style="left:1556px;top:332px;width:346px;height:24px;background:#fff;border:1px solid #888;border-radius:2px"></div>
<div class="a" style="left:1558px;top:350px;width:342px;height:1px;background:#222"></div>
<div class="t l" style="left:1375px;top:366px">Opacity</div>
<div class="ip" style="left:1556px;top:362px;width:346px"><i></i>255</div>
<div class="t l" style="left:1375px;top:396px">Skew</div>
<div class="xl" style="left:1553px;top:397px">X</div><div class="ip" style="left:1571px;top:392px;width:154px"><i></i>0</div>
<div class="xl" style="left:1732px;top:397px">Y</div><div class="ip" style="left:1750px;top:392px;width:152px"><i></i>0</div>
<div class="t l" style="left:1375px;top:426px">Group</div>
<div class="a" style="left:1556px;top:422px;width:292px;height:24px;background:linear-gradient(#555,#444);border:1px solid #1c1c1c;border-radius:3px;padding-left:10px;color:#aaa;font-size:12.500px;line-height:24px">default</div>
<div class="a" style="left:1829px;top:431px;width:0;height:0;border:4px solid transparent;border-top:7px solid #ccc;border-bottom:0"></div>
<div class="a" style="left:1852px;top:423px;width:51px;height:22px;background:linear-gradient(#4a8cc8,#2f6eaa);border:1px solid #1e3e60;border-radius:2px;color:#e8f0f8;font-weight:bold;font-size:11px;line-height:20px;text-align:center">编辑</div>

<div class="ad2" style="left:1363px;top:472px;border-top-width:7px"></div>
<div class="cb" style="left:1375px;top:467px"></div>
<svg class="a" style="left:1375px;top:467px" width="15" height="16" viewBox="0 0 15 16"><path d="M3 8l3 3 6-7" fill="none" stroke="#f7941d" stroke-width="2.400"/></svg>
<div class="t" style="left:1393px;top:467px;font-weight:bold;color:#a8a8a8;font-size:12.500px">background</div>
<svg class="gear" style="left:1888px;top:470px"><use href="#gr"/></svg>
<div class="sep" style="top:487px"></div>
<div class="t l" style="left:1375px;top:510px">Script</div>
<svg class="a" style="left:1542px;top:512px" width="9" height="11" viewBox="0 0 9 11"><path d="M2 5V3a2.500 2.500 0 0 1 5 0v2" fill="none" stroke="#bbb" stroke-width="1.300"/><rect x="0.500" y="5" width="8" height="6" rx="1" fill="#bbb"/></svg>
<div class="tag" style="left:1556px;top:497px;width:50px">script</div>
<svg class="a" style="left:1589px;top:498px" width="10" height="9" viewBox="0 0 10 9" fill="none" stroke="#3d7db6"><path d="M6 1H1v7h7V5M5 5l4-4M6 1h3v3"/></svg>
<div class="fld" style="left:1556px;top:507px;width:344px;height:23px"></div>
<div class="blue" style="left:1559px;top:509px;width:315px;height:18px">background</div>
<svg class="a" style="left:1881px;top:513px" width="10" height="10"><use href="#xx"/></svg>

<div class="ad2" style="left:1363px;top:556px;border-top-width:7px"></div>
<div class="cb" style="left:1375px;top:551px"></div>
<svg class="a" style="left:1375px;top:551px" width="15" height="16" viewBox="0 0 15 16"><path d="M3 8l3 3 6-7" fill="none" stroke="#f7941d" stroke-width="2.400"/></svg>
<div class="t" style="left:1393px;top:551px;font-weight:bold;color:#a8a8a8;font-size:12.500px">TiledMap</div>
<svg class="gear" style="left:1888px;top:554px"><use href="#gr"/></svg>
<div class="sep" style="top:571px"></div>
<div class="t l" style="left:1375px;top:593px">Tmx Asset</div>
<div class="tag" style="left:1556px;top:579px;width:65px">tiled-map</div>
<svg class="a" style="left:1605px;top:580px" width="10" height="9" viewBox="0 0 10 9" fill="none" stroke="#3d7db6"><path d="M6 1H1v7h7V5M5 5l4-4M6 1h3v3"/></svg>
<div class="fld" style="left:1556px;top:589px;width:344px;height:25px"></div>
<div class="blue" style="left:1559px;top:592px;width:315px;height:19px">家中</div>
<svg class="a" style="left:1881px;top:597px" width="10" height="10"><use href="#xx"/></svg>
<div class="btn" style="left:1513px;top:638px;width:240px;height:25px;line-height:23px;font-size:12.500px;font-weight:bold;color:#aaa;border-radius:3px">添加组件</div>

<!-- status bar -->
<div class="a" style="left:0;top:1021px;width:1916px;height:20px;background:#232323"></div>
<svg class="a" style="left:10px;top:1030px" width="60" height="11" viewBox="0 0 60 11" fill="none" stroke="#555" stroke-width="1.500"><path d="M3 0v8h9M0 3h9v8"/><rect x="29" y="0" width="8" height="3" fill="#555"/><rect x="29" y="4" width="8" height="3" fill="#555"/><rect x="29" y="8" width="8" height="3" fill="#555"/><ellipse cx="52" cy="6" rx="6" ry="3.500"/><circle cx="52" cy="6" r="1.500" fill="#555"/></svg>
<svg class="a" style="left:1039px;top:1029px" width="13" height="12" viewBox="0 0 13 12"><path d="M6.500 0L13 12H0z" fill="#d99a2b"/><rect x="5.800" y="4" width="1.400" height="4" fill="#222"/></svg>
<div class="t" style="left:1056px;top:1028px;color:#d48d26;font-size:12px;height:13px;overflow:hidden;line-height:16px">Please specify a default value for "Joyctrl" property at its declaration: // Before: @property(...) value; // After: @property(...) value = 0 h</div>
<div class="t" style="left:1792px;top:1028px;color:#e4651c;font-size:12px;height:13px;overflow:hidden;line-height:16px">Cocos Creator v2.0.9</div>

<!-- taskbar -->
<div class="a" style="left:0;top:1041px;width:1920px;height:15px;background:#a6c0dc"></div>
<div class="a" style="left:0;top:1041px;width:122px;height:15px;background:linear-gradient(90deg,#7f8fa0,#8e9fb3 40%,#a2bad4)"></div>
<div class="a" style="left:1704px;top:1041px;width:216px;height:15px;background:linear-gradient(90deg,#a6c0dc,#8699b0 15%,#8699b0)"></div>
<div class="a" style="left:1916px;top:1041px;width:4px;height:15px;background:#99a9bc;border-left:1px solid #555"></div>
<svg class="a" style="left:0;top:1041px" width="510" height="15" viewBox="0 1041 510 15">
<circle cx="27" cy="1059" r="18" fill="#2f6eb0" stroke="#dde6f0"/><path d="M20 1053h6v6h-6z" fill="#e84c2c"/><path d="M27 1052h6v7h-6z" fill="#8cc63f"/>
<path d="M74 1052h30v6H74z" fill="#f6e2a4" stroke="#9a8c5c"/><path d="M74 1048h14l2 4H74z" fill="#f4dc90" stroke="#9a8c5c"/><rect x="81" y="1047" width="5" height="3" fill="#3c9a3c"/><rect x="91" y="1049" width="5" height="3" fill="#d83a2c"/>
<rect x="122" y="1041" width="58" height="15" fill="#d2deeb" stroke="#5d7088"/>
<circle cx="151" cy="1057" r="14" fill="#d6392c"/><path d="M151 1057l14 0a14 14 0 0 1-3 9z" fill="#f3b01b"/><circle cx="151" cy="1057" r="6" fill="#fff"/><circle cx="151" cy="1057" r="4" fill="#3e7ee0"/>
<circle cx="212" cy="1059" r="13" fill="none" stroke="#1a84f0" stroke-width="6"/>
<path d="M261 1050l26-5 2 11h-28z" fill="#2f9cc0"/><rect x="262" y="1051" width="22" height="5" fill="#f4a92c"/>
<rect x="322" y="1046" width="28" height="10" fill="#d8ecd8" stroke="#2f8a3c"/><path d="M331 1048l5 8M341 1048l-4 8" stroke="#2f7a34" stroke-width="3"/>
<rect x="383" y="1045" width="32" height="11" rx="5" fill="#fff"/><circle cx="398" cy="1056" r="5" fill="none" stroke="#3aa4f0" stroke-width="2"/><path d="M393 1050a5 5 0 0 1 6 0" stroke="#e85a7a" stroke-width="2" fill="none"/>
<rect x="432" y="1041" width="58" height="15" fill="#d2deeb" stroke="#5d7088"/>
<circle cx="461" cy="1058" r="13" fill="#fff"/><path d="M461 1048l-6 8h3l3-3 3 3h3z" fill="#999"/>
</svg>
<div class="t" style="left:1855px;top:1042px;color:#111;font-size:12px">9:56</div>
<svg class="a" style="left:1725px;top:1043px" width="90" height="13" viewBox="0 0 90 13"><path d="M6 7l3-2 1 3 3-3" stroke="#555" fill="none"/><circle cx="66" cy="11" r="4" fill="#7ac020"/><rect x="73" y="8" width="10" height="5" fill="#444"/></svg>
</body></html>
